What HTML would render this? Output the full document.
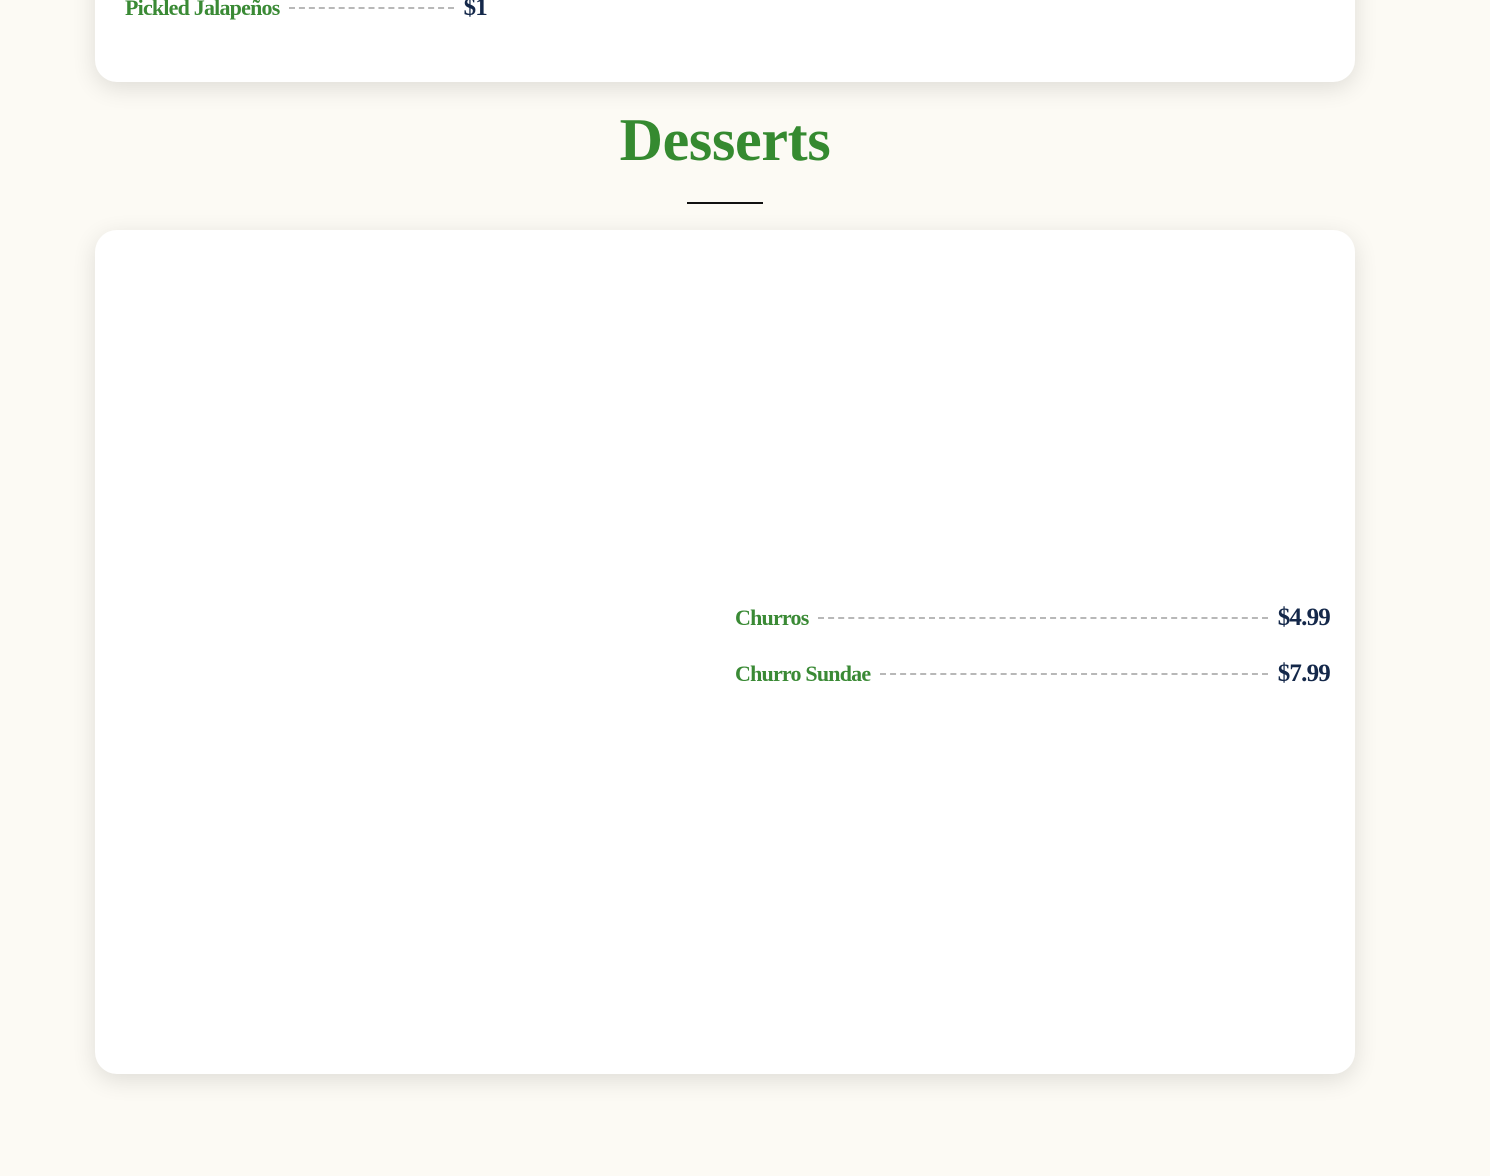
<!DOCTYPE html>
<html><head><style>
body{margin:0;width:1490px;height:1176px;background:#fcfaf4;font-family:"Liberation Serif",serif;position:relative;overflow:hidden}
.card{position:absolute;left:95px;width:1260px;background:#fff;border-radius:22px;box-shadow:0 6px 24px rgba(0,0,0,0.12)}
.row{position:absolute;display:flex;align-items:center;font-size:22px;letter-spacing:-0.8px;font-weight:bold}
.n{color:#3a8a35}
.d{flex:1;border-top:2px dashed #b8b8b8;margin:0 10px}
.p{color:#14284a;font-weight:bold;font-size:25px}
h2{position:absolute;top:106px;left:0;width:1450px;text-align:center;margin:0;font-size:60px;color:#358a30;font-weight:bold;letter-spacing:-0.3px}
.line{position:absolute;left:687px;top:202px;width:76px;height:2px;background:#111}
</style></head><body>
<div class="card" style="top:-40px;height:122px"></div>
<div class="row" style="left:125px;top:-6px;width:362px"><span class="n">Pickled Jalapeños</span><span class="d"></span><span class="p">$1</span></div>
<h2>Desserts</h2>
<div class="line"></div>
<div class="card" style="top:230px;height:844px"></div>
<div class="row" style="left:735px;top:604px;width:595px"><span class="n">Churros</span><span class="d"></span><span class="p">$4.99</span></div>
<div class="row" style="left:735px;top:660px;width:595px"><span class="n">Churro Sundae</span><span class="d"></span><span class="p">$7.99</span></div>
</body></html>
